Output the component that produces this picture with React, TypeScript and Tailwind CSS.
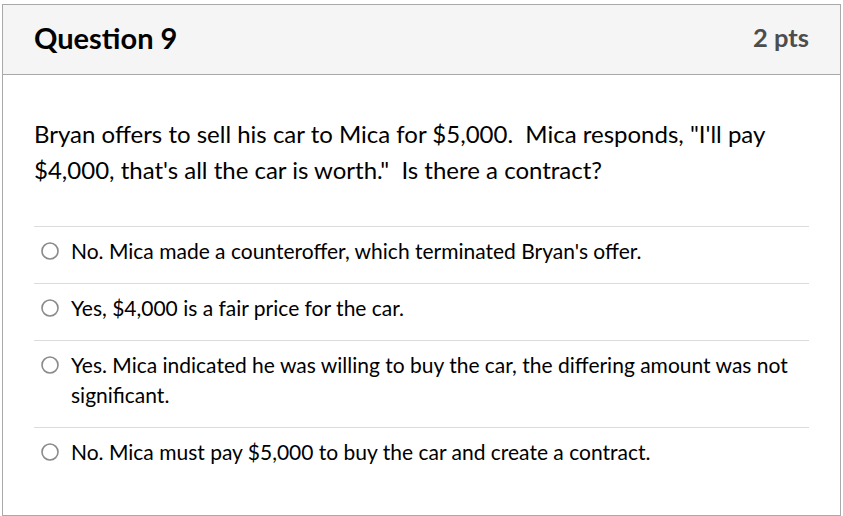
import React from "react";

const options = [
  "No. Mica made a counteroffer, which terminated Bryan's offer.",
  "Yes, $4,000 is a fair price for the car.",
  "Yes. Mica indicated he was willing to buy the car, the differing amount was not significant.",
  "No. Mica must pay $5,000 to buy the car and create a contract.",
];

function Radio() {
  return (
    <svg width="18" height="18" viewBox="0 0 18 18" className="shrink-0 mt-[6px]">
      <circle cx="9" cy="9" r="8" fill="white" stroke="#8a8a8a" strokeWidth="1.6" />
    </svg>
  );
}

export default function App() {
  return (
    <div
      className="w-[843px] h-[516px] bg-white overflow-hidden text-[#1b1b1b]"
      style={{ fontFamily: "Lato, 'Open Sans', sans-serif" }}
    >
      <div className="ml-[2px] mt-[4px] w-[839px] h-[512px] border border-[#a9a9a9] flex flex-col">
        <div className="h-[70px] bg-[#f5f5f5] border-b border-[#a9a9a9] flex items-center justify-between pl-[31px] pr-[31px] pb-[4px]">
          <div className="text-[29px] font-bold text-black leading-none">Question 9</div>
          <div className="text-[25.5px] font-bold text-[#4d4d4d] leading-none">2 pts</div>
        </div>
        <div className="px-[31px] pt-[41px]">
          <p className="text-[24px] leading-[36px] text-black">
            Bryan offers to sell his car to Mica for $5,000.&nbsp; Mica responds, "I'll pay $4,000, that's all the car is
            worth."&nbsp; Is there a contract?
          </p>
          <div className="mt-[38px]">
            {options.map((o, i) => (
              <div key={i} className="border-t border-[#dcdcdc] pt-[9px] pb-[17px] flex gap-[12px] pl-[7px]">
                <Radio />
                <div className="text-[21px] leading-[30px] text-black">{o}</div>
              </div>
            ))}
          </div>
        </div>
      </div>
    </div>
  );
}
